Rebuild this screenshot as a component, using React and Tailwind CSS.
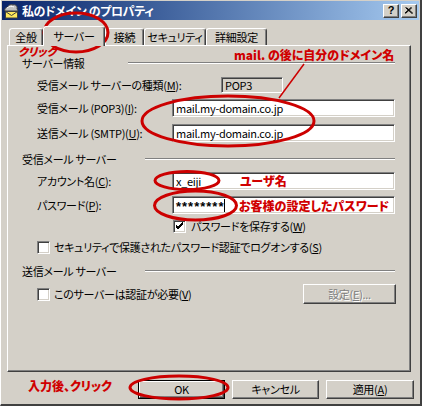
import React from "react";

// Windows 2000 style "properties" dialog with red hand-drawn annotations

const raised =
  "border border-t-white border-l-white border-r-[#404040] border-b-[#404040] shadow-[inset_-1px_-1px_0_#808080]";
const sunken =
  "border border-t-[#808080] border-l-[#808080] border-r-white border-b-white shadow-[inset_1px_1px_0_#404040,inset_-1px_-1px_0_#d4d0c8]";

const Key = ({ k }) => <span className="underline">{k}</span>;

const Tab = ({ label, selected, className }) => (
  <div
    className={`${className} flex items-center justify-center whitespace-nowrap border-t border-l border-r border-t-white border-l-white border-r-[#404040] rounded-t-[3px] shadow-[inset_-1px_0_0_#808080] ${
      selected ? "h-[20px] relative z-10 mb-[-1px] bg-[#d4d0c8]" : "h-[17px] pt-[1px]"
    }`}
  >
    {label}
  </div>
);

const GroupHead = ({ label, labelWidth, className }) => (
  <div className={`${className} flex items-center h-[14px] pl-[14px] pr-[15px]`}>
    <span className={`${labelWidth} whitespace-nowrap`}>{label}</span>
    <div className="flex-1 h-[2px] border-t border-t-[#808080] border-b border-b-white" />
  </div>
);

const Field = ({ label, children, className }) => (
  <div className={`${className} flex items-center h-[18px] pl-[29px] pr-[15px]`}>
    <span className="w-[135px] shrink-0 whitespace-nowrap">{label}</span>
    <div className={`${sunken} flex-1 h-full bg-white flex items-center pl-[3px] text-black`}>{children}</div>
  </div>
);

const Check = ({ checked }) => (
  <div className={`${sunken} w-[13px] h-[13px] bg-white shrink-0 flex items-center justify-center`}>
    {checked && (
      <svg width="9" height="9" viewBox="0 0 9 9">
        <path d="M1 4 L3 6 L8 1 M1 5 L3 7 L8 2 M1 3 L3 5 L8 0" stroke="#000" strokeWidth="1" fill="none" />
      </svg>
    )}
  </div>
);

const TitleIcon = () => (
  <svg width="16" height="16" viewBox="0 0 16 16" className="shrink-0">
    <path d="M2 8 C1 6 3 4 5 4 C5 2 8 1 10 2 C12 1 15 3 14 6 C15 7 15 8 14 8 Z" fill="#c0c0c0" stroke="#404040" strokeWidth="1" />
    <path d="M4 5 C6 3 9 3 11 4" stroke="#ffffff" strokeWidth="1" fill="none" />
    <rect x="2.5" y="8.5" width="12" height="6.5" fill="#ffe85a" stroke="#404040" />
    <path d="M2.5 8.5 L8.5 12.5 L14.5 8.5" stroke="#404040" fill="none" />
  </svg>
);

const App = () => {
  return (
    <div className="relative w-[422px] h-[406px] overflow-hidden bg-[#d4d0c8] border-l border-l-white border-r-2 border-r-[#404040] border-b-2 border-b-[#404040] pl-[1px] pr-[1px] pt-[1px] font-['Noto_Sans_CJK_JP',sans-serif] text-[11px] tracking-[-0.3px] leading-none text-black [font-feature-settings:'palt']">
      {/* title bar */}
      <div className="h-[19px] flex items-center pl-[1px] pr-[2px] bg-gradient-to-r from-[#0a246a] to-[#a6caf0]">
        <TitleIcon />
        <span className="ml-[3px] text-white font-bold text-[12px] tracking-[-0.4px]">私のドメイン のプロパティ</span>
        <div className="ml-auto flex gap-[2px]">
          <div className={`${raised} w-[16px] h-[14px] bg-[#d4d0c8] flex items-center justify-center font-['Liberation_Sans',sans-serif] font-bold text-[11px]`}>
            ?
          </div>
          <div className={`${raised} w-[16px] h-[14px] bg-[#d4d0c8] flex items-center justify-center`}>
            <svg width="8" height="7" viewBox="0 0 8 7">
              <path d="M0.5 0.5 L7 6.5 M7 0.5 L0.5 6.5 M1.5 0.5 L8 6.5 M6 0.5 L-0.5 6.5" stroke="#000" strokeWidth="1" fill="none" />
            </svg>
          </div>
        </div>
      </div>

      {/* tabs */}
      <div className="flex items-end h-[19px] mt-[6px] ml-[7px]">
        <Tab label="全般" className="w-[34px]" />
        <Tab label="サーバー" selected className="w-[62px]" />
        <Tab label="接続" className="w-[39px]" />
        <Tab label="セキュリティ" className="w-[62px]" />
        <Tab label="詳細設定" className="w-[61px]" />
      </div>

      {/* panel */}
      <div className={`${raised} ml-[5px] w-[404px] h-[327px] flex flex-col`}>
        <GroupHead className="mt-[10px]" label="サーバー情報" labelWidth="w-[106px]" />

        <div className="mt-[7px] flex items-center h-[16px] pl-[29px]">
          <span className="w-[184px] whitespace-nowrap">
            受信メール サーバーの種類(<Key k="M" />):
          </span>
          <div className={`${sunken} w-[62px] h-[16px] flex items-center pl-[3px] bg-[#d4d0c8]`}>POP3</div>
        </div>

        <Field className="mt-[6px]" label={<>受信メール (POP3)(<Key k="I" />):</>}>
          mail.my-domain.co.jp
        </Field>
        <Field className="mt-[7px]" label={<>送信メール (SMTP)(<Key k="U" />):</>}>
          mail.my-domain.co.jp
        </Field>

        <GroupHead className="mt-[10px]" label="受信メール サーバー" labelWidth="w-[123px]" />

        <Field className="mt-[6px]" label={<>アカウント名(<Key k="C" />):</>}>
          x_eiji
        </Field>
        <Field className="mt-[6px]" label={<>パスワード(<Key k="P" />):</>}>
          <span className="font-['Liberation_Sans',sans-serif] text-[13px] font-bold tracking-[1px] leading-none pt-[3px]">********</span>
          <span className="w-px h-[13px] bg-black" />
        </Field>

        <div className="mt-[5px] h-[14px] flex items-center pl-[165px] gap-[5px]">
          <Check checked />
          <span className="whitespace-nowrap">
            パスワードを保存する(<Key k="W" />)
          </span>
        </div>
        <div className="mt-[7px] h-[14px] flex items-center pl-[29px] gap-[4px]">
          <Check />
          <span className="whitespace-nowrap">
            セキュリティで保護されたパスワード認証でログオンする(<Key k="S" />)
          </span>
        </div>

        <GroupHead className="mt-[10px]" label="送信メール サーバー" labelWidth="w-[123px]" />

        <div className="mt-[6px] h-[20px] flex items-center pl-[29px] pr-[14px]">
          <Check />
          <span className="ml-[4px] whitespace-nowrap">
            このサーバーは認証が必要(<Key k="V" />)
          </span>
          <div className={`${raised} ml-auto w-[93px] h-[20px] flex items-center justify-center text-[#808080] [text-shadow:1px_1px_0_#ffffff]`}>
            設定(<Key k="E" />)...
          </div>
        </div>
      </div>

      {/* dialog buttons */}
      <div className="mt-[8px] h-[19px] flex justify-end gap-[7px] pr-[5px]">
        <div className="w-[87px] h-[19px] border border-black">
          <div className={`${raised} w-full h-full flex items-center justify-center`}>OK</div>
        </div>
        <div className={`${raised} w-[87px] h-[19px] flex items-center justify-center`}>キャンセル</div>
        <div className={`${raised} w-[88px] h-[19px] flex items-center justify-center`}>
          適用(<Key k="A" />)
        </div>
      </div>

      {/* red annotations */}
      <span className="absolute left-[17px] top-[46px] text-[11px] tracking-normal font-black italic text-[#d00000]">クリック</span>
      <span className="absolute left-[233px] top-[49px] text-[12px] tracking-normal font-black text-[#d00000]">mail. の後に自分のドメイン名</span>
      <span className="absolute left-[239px] top-[175px] text-[12px] tracking-normal font-black text-[#d00000]">ユーザ名</span>
      <span className="absolute left-[238px] top-[200px] text-[12px] tracking-normal font-black text-[#d00000]">お客様の設定したパスワード</span>
      <span className="absolute left-[27px] top-[380px] text-[12px] tracking-normal font-black text-[#d00000]">入力後、クリック</span>

      <svg className="absolute left-0 top-0 pointer-events-none" width="422" height="406" viewBox="0 0 422 406">
        <g fill="none" stroke="#cc0000" strokeWidth="3">
          <ellipse cx="75" cy="32.5" rx="32" ry="19.5" />
          <ellipse cx="227" cy="121" rx="86" ry="25" />
          <ellipse cx="186" cy="180.5" rx="32" ry="9" />
          <ellipse cx="194.5" cy="205.5" rx="41" ry="14.5" />
          <ellipse cx="178" cy="387.5" rx="49" ry="11.5" />
        </g>
        <line x1="278" y1="98" x2="303" y2="64" stroke="#cc0000" strokeWidth="1.5" />
      </svg>
    </div>
  );
};

export default App;
